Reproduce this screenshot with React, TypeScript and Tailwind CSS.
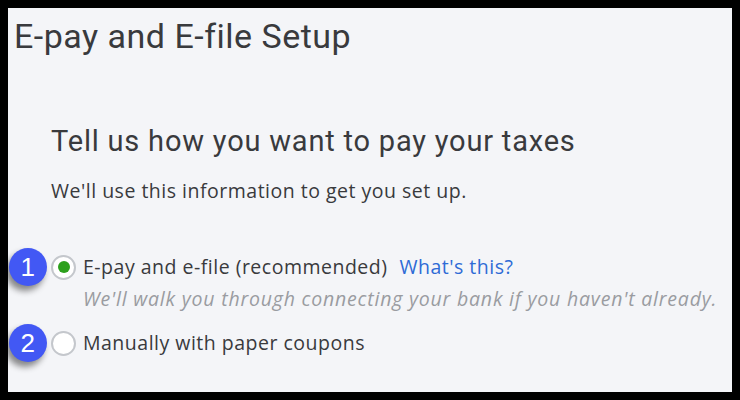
const Badge = ({ n }: { n: number }) => (
  <div className="absolute left-[-42px] top-1/2 -translate-y-1/2 w-[38px] h-[38px] rounded-full bg-[#4258f4] text-white flex items-center justify-center text-[26px] leading-none shadow-[-3px_5px_6px_rgba(0,0,0,0.45)] font-['Liberation_Sans',sans-serif]">
    {n}
  </div>
);

const Radio = ({ checked }: { checked?: boolean }) => (
  <span className="w-[25px] h-[25px] rounded-full bg-white border-2 border-[#c4c7cc] flex items-center justify-center shrink-0">
    {checked && <span className="w-[12px] h-[12px] rounded-full bg-[#2ca01c]" />}
  </span>
);

export default function App() {
  return (
    <div className="w-[740px] h-[400px] bg-black p-[8px]">
      <div className="w-full h-full bg-[#f4f5f8] text-[#393a3d] font-['Open_Sans',sans-serif] overflow-hidden">
        <h1 className="pl-[6px] pt-[8px] text-[34px] leading-[40px] font-['Roboto',sans-serif] tracking-[0.5px]">
          E-pay and E-file Setup
        </h1>

        <div className="pl-[43px] pt-[68px]">
          <h2 className="text-[29px] leading-[34px] font-['Roboto',sans-serif] tracking-[0.8px]">
            Tell us how you want to pay your taxes
          </h2>
          <p className="mt-[21px] text-[19.5px] leading-[24px] tracking-[0.5px]">
            We'll use this information to get you set up.
          </p>

          <div className="mt-[51px] flex flex-col">
            <label className="relative flex items-center gap-[7px] text-[19.5px] leading-[26px] tracking-[0.5px]">
              <Badge n={1} />
              <Radio checked />
              <span>E-pay and e-file (recommended)</span>
              <a className="ml-[5px] text-[#2e6bd6]">What's this?</a>
            </label>
            <p className="pl-[32px] mt-[6px] text-[19.5px] leading-[26px] italic text-[#9a9ca1] tracking-[0.8px]">
              We'll walk you through connecting your bank if you haven't already.
            </p>
            <label className="relative mt-[18px] flex items-center gap-[7px] text-[19.5px] leading-[26px] tracking-[0.5px]">
              <Badge n={2} />
              <Radio />
              <span>Manually with paper coupons</span>
            </label>
          </div>
        </div>
      </div>
    </div>
  );
}
